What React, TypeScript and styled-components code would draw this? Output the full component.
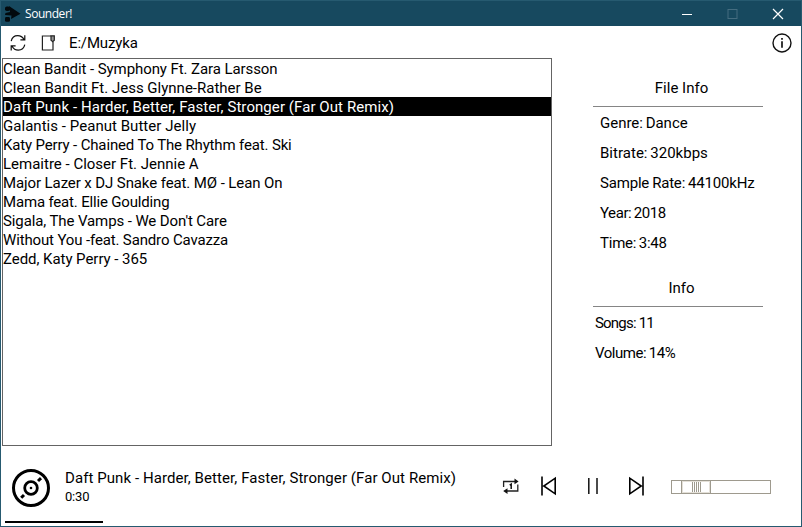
import React from "react";
import styled, { createGlobalStyle } from "styled-components";

const GlobalStyle = createGlobalStyle`
  * { box-sizing: border-box; }
  body { margin: 0; background: #fff; }
`;

const Frame = styled.div`
  width: 802px;
  height: 527px;
  display: flex;
  flex-direction: column;
  background: #fff;
  border: 1px solid #265a70;
  color: #000;
  font: 15px/19px Roboto, "Liberation Sans", sans-serif;
  overflow: hidden;
`;

const TitleBar = styled.header`
  flex: 0 0 25px;
  display: flex;
  align-items: center;
  justify-content: space-between;
  padding-left: 3px;
  background: #17495f;
  color: #fff;
`;

const AppTitle = styled.div`
  display: flex;
  align-items: center;
  gap: 4px;
  font: 12px/16px "Open Sans", "Noto Sans", sans-serif;
  letter-spacing: -0.45px;
  svg { display: block; }
`;

const WindowButtons = styled.div`
  display: flex;
`;

const WindowButton = styled.button`
  width: 45.5px;
  height: 25px;
  padding: 0;
  border: 0;
  background: none;
  display: grid;
  place-items: center;
`;

const Text = styled.span<{ $spacing?: number; $word?: number }>`
  white-space: pre;
  letter-spacing: ${(p) => p.$spacing ?? 0}px;
  word-spacing: ${(p) => p.$word ?? 0}px;
`;

const Toolbar = styled.div`
  flex: 0 0 32px;
  display: flex;
  align-items: center;
  padding: 2px 9px 0 8px;
`;

const FolderPath = styled.div`
  flex: 1;
  margin-left: 13px;
`;

const IconButton = styled.button<{ $w: number; $h: number; $left?: number }>`
  width: ${(p) => p.$w}px;
  height: ${(p) => p.$h}px;
  margin-left: ${(p) => p.$left ?? 0}px;
  padding: 0;
  border: 0;
  background: none;
  svg { display: block; }
`;

const Main = styled.main`
  flex: 0 0 388px;
  display: flex;
  padding-left: 1px;
`;

const SongList = styled.ul`
  width: 550px;
  margin: 0;
  padding: 0;
  list-style: none;
  border: 1px solid #646464;
`;

const SongRow = styled.li<{ $selected?: boolean }>`
  height: 19px;
  padding-top: 1px;
  background: ${(p) => (p.$selected ? "#000" : "transparent")};
  color: ${(p) => (p.$selected ? "#fff" : "#000")};
`;

const Sidebar = styled.aside`
  width: 170px;
  margin-left: 41px;
  padding-top: 20px;
`;

const InfoSection = styled.section`
  margin-bottom: 25px;
`;

const InfoHeading = styled.h2`
  height: 29px;
  margin: 0;
  padding: 1px 0 0 7px;
  font: inherit;
  text-align: center;
  border-bottom: 1px solid #858585;
`;

const InfoLines = styled.div<{ $indent: number }>`
  display: flex;
  flex-direction: column;
  gap: 11px;
  padding: 7px 0 0 ${(p) => p.$indent}px;
`;

const Player = styled.footer`
  flex: 1;
  display: flex;
  flex-direction: column;
`;

const PlayerRow = styled.div`
  height: 75px;
  display: flex;
  align-items: center;
  padding: 8px 0 0 10px;
  svg { display: block; }
`;

const NowPlaying = styled.div`
  width: 435px;
  margin-left: 14px;
  padding-bottom: 1px;
`;

const Elapsed = styled.div`
  font-size: 13px;
  line-height: 18px;
  letter-spacing: -0.2px;
`;

const Controls = styled.div`
  display: flex;
  align-items: center;
  padding: 0 0 4px 1px;
`;

const VolumeTrack = styled.div`
  width: 100px;
  height: 14px;
  margin: 2px 0 0 26px;
  padding-left: 9px;
  border: 1px solid #9e9a8e;
  display: flex;
`;

const VolumeThumb = styled.div`
  width: 30px;
  height: 14px;
  margin-top: -1px;
  border: 1px solid #9e9a8e;
  box-shadow: inset 0 0 0 1px #e4e0d8;
  display: flex;
  align-items: center;
  justify-content: center;
  gap: 1px;
`;

const Grip = styled.i`
  width: 1px;
  height: 10px;
  background: #9e9a8e;
`;

const Progress = styled.div`
  width: 98px;
  height: 2px;
  margin-left: 4px;
  background: #000;
`;

const songs: { title: string; spacing: number; selected?: boolean }[] = [
  { title: "Clean Bandit - Symphony Ft. Zara Larsson", spacing: -0.08 },
  { title: "Clean Bandit Ft. Jess Glynne-Rather Be", spacing: 0 },
  { title: "Daft Punk - Harder, Better, Faster, Stronger (Far Out Remix)", spacing: 0.075, selected: true },
  { title: "Galantis - Peanut Butter Jelly", spacing: 0.04 },
  { title: "Katy Perry - Chained To The Rhythm feat. Ski", spacing: -0.15 },
  { title: "Lemaitre - Closer Ft. Jennie A", spacing: 0 },
  { title: "Major Lazer x DJ Snake feat. MØ - Lean On", spacing: -0.1 },
  { title: "Mama feat. Ellie Goulding", spacing: -0.17 },
  { title: "Sigala, The Vamps - We Don't Care", spacing: -0.105 },
  { title: "Without You -feat. Sandro Cavazza", spacing: -0.14 },
  { title: "Zedd, Katy Perry - 365", spacing: -0.05 },
];

const fileInfo = [
  { text: "Genre: Dance", spacing: -0.01, word: -1 },
  { text: "Bitrate: 320kbps", spacing: 0.02, word: -1 },
  { text: "Sample Rate: 44100kHz", spacing: -0.19, word: -0.5 },
  { text: "Year: 2018", spacing: -0.42, word: -0.8 },
  { text: "Time: 3:48", spacing: -0.22, word: -1 },
];

const libraryInfo = [
  { text: "Songs: 11", spacing: -0.8, word: 0 },
  { text: "Volume: 14%", spacing: -0.48, word: -0.5 },
];

const Logo = () => (
  <svg width="17" height="18" viewBox="0 0 17 18">
    <path d="M5 1L16.5 8.8L7 14L7.5 10.5L1 10L1.5 8L6 7Z" fill="#02090d" />
    <rect x="1" y="1.5" width="5" height="4.5" rx="1.8" fill="#02090d" />
    <rect x="1" y="12" width="5" height="4.8" rx="1.4" fill="#02090d" />
  </svg>
);

const RefreshIcon = () => (
  <svg width="18" height="18" viewBox="0 0 18 18" fill="none" stroke="#111" strokeWidth="1.2">
    <path d="M2.2 7.2C3 3.8 5.6 1.7 8.7 1.7C11.4 1.7 13.7 3.2 15 5.6M15.8 1.2V5.9H11.4" />
    <path d="M15.8 10.6C15 14 12.4 16.1 9.3 16.1C6.6 16.1 4.3 14.6 3 12.2M2.2 16.6V11.9H6.6" />
  </svg>
);

const FolderIcon = () => (
  <svg width="15" height="18" viewBox="0 0 15 18" fill="none" stroke="#222" strokeWidth="1.2">
    <path d="M10 2H1.4V16H12V8" />
    <path d="M10 1.8V6.2L11.8 7.6L13.3 6.2V1.8Z" fill="#999" />
  </svg>
);

const InfoIcon = () => (
  <svg width="20" height="20" viewBox="0 0 20 20">
    <circle cx="10" cy="10" r="9" fill="none" stroke="#111" strokeWidth="1.4" />
    <path d="M10 5V6.8M10 8.3V14.8" stroke="#222" strokeWidth="1.8" />
  </svg>
);

const DiscIcon = () => (
  <svg width="40" height="40" viewBox="0 0 40 40" fill="none" stroke="#000">
    <circle cx="20" cy="20" r="17.5" strokeWidth="3" />
    <circle cx="20" cy="20" r="6.3" strokeWidth="2.8" />
    <circle cx="20" cy="20" r="1.3" fill="#000" stroke="none" />
    <path d="M27 13L30 10.2M10.2 29.8L13 27" strokeWidth="3" />
  </svg>
);

const RepeatOneIcon = () => (
  <svg width="18" height="18" viewBox="0 0 18 18">
    <path d="M1.6 10V4.5H13M15.8 7.5V14H5" fill="none" stroke="#222" strokeWidth="1.3" />
    <path d="M12.5 1.5L16.6 4.5L12.5 7.3ZM5.5 11.2L1.2 14L5.5 17Z" fill="#111" />
    <path d="M7.7 8.2L9.2 7.2V12" fill="none" stroke="#111" strokeWidth="1.5" />
  </svg>
);

const PreviousIcon = () => (
  <svg width="18" height="22" viewBox="0 0 18 22" fill="none" stroke="#000" strokeWidth="1.6">
    <path d="M2 1.5V20.5M15.2 3.2V18.8L3.8 11Z" />
  </svg>
);

const PauseIcon = () => (
  <svg width="12" height="22" viewBox="0 0 12 22" stroke="#111" strokeWidth="1.5">
    <path d="M1.8 3V19M10 3V19" />
  </svg>
);

const NextIcon = () => (
  <svg width="18" height="22" viewBox="0 0 18 22" fill="none" stroke="#000" strokeWidth="1.6">
    <path d="M16 1.5V20.5M2.8 3.2V18.8L14.2 11Z" />
  </svg>
);

export default function App() {
  return (
    <Frame>
      <GlobalStyle />
      <TitleBar>
        <AppTitle><Logo />Sounder!</AppTitle>
        <WindowButtons>
          <WindowButton aria-label="Minimize">
            <svg width="12" height="12"><path d="M1 6.5H11" stroke="#fff" /></svg>
          </WindowButton>
          <WindowButton aria-label="Maximize" disabled>
            <svg width="12" height="12"><rect x="1" y="1.5" width="9" height="9" fill="none" stroke="#456d80" /></svg>
          </WindowButton>
          <WindowButton aria-label="Close">
            <svg width="12" height="12"><path d="M1 1L11 11M11 1L1 11" stroke="#fff" strokeWidth="1.2" /></svg>
          </WindowButton>
        </WindowButtons>
      </TitleBar>
      <Toolbar>
        <IconButton $w={18} $h={18} aria-label="Refresh"><RefreshIcon /></IconButton>
        <IconButton $w={15} $h={18} $left={14} aria-label="Open folder"><FolderIcon /></IconButton>
        <FolderPath><Text $spacing={-0.15}>E:/Muzyka</Text></FolderPath>
        <IconButton $w={20} $h={20} aria-label="About"><InfoIcon /></IconButton>
      </Toolbar>
      <Main>
        <SongList>
          {songs.map((s) => (
            <SongRow key={s.title} $selected={s.selected}>
              <Text $spacing={s.spacing}>{s.title}</Text>
            </SongRow>
          ))}
        </SongList>
        <Sidebar>
          <InfoSection>
            <InfoHeading>File Info</InfoHeading>
            <InfoLines $indent={7}>
              {fileInfo.map((l) => (
                <Text key={l.text} $spacing={l.spacing} $word={l.word}>{l.text}</Text>
              ))}
            </InfoLines>
          </InfoSection>
          <InfoSection>
            <InfoHeading>Info</InfoHeading>
            <InfoLines $indent={2}>
              {libraryInfo.map((l) => (
                <Text key={l.text} $spacing={l.spacing} $word={l.word}>{l.text}</Text>
              ))}
            </InfoLines>
          </InfoSection>
        </Sidebar>
      </Main>
      <Player>
        <PlayerRow>
          <DiscIcon />
          <NowPlaying>
            <Text $spacing={0.075}>{songs[2].title}</Text>
            <Elapsed>0:30</Elapsed>
          </NowPlaying>
          <Controls>
            <IconButton $w={18} $h={18} $left={1} aria-label="Repeat one"><RepeatOneIcon /></IconButton>
            <IconButton $w={18} $h={22} $left={20} aria-label="Previous"><PreviousIcon /></IconButton>
            <IconButton $w={12} $h={22} $left={29} aria-label="Pause"><PauseIcon /></IconButton>
            <IconButton $w={18} $h={22} $left={28} aria-label="Next"><NextIcon /></IconButton>
            <VolumeTrack>
              <VolumeThumb><Grip /><Grip /><Grip /><Grip /><Grip /></VolumeThumb>
            </VolumeTrack>
          </Controls>
        </PlayerRow>
        <Progress />
      </Player>
    </Frame>
  );
}
